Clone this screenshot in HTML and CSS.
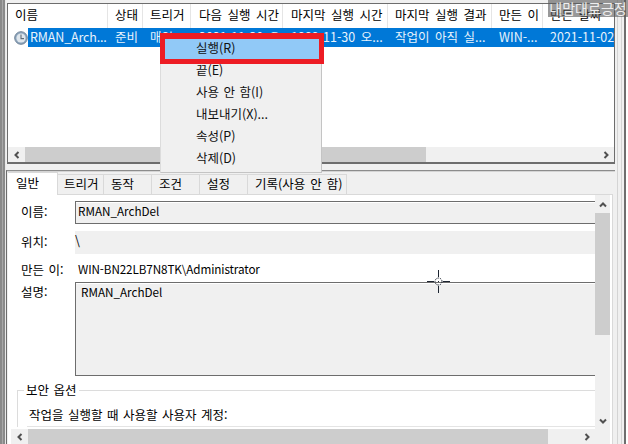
FILE: index.html
```html
<!DOCTYPE html>
<html lang="ko">
<head>
<meta charset="utf-8">
<title>작업 스케줄러</title>
<link rel="stylesheet" href="styles.css">
</head>
<body>
<div class="window">
  <div class="edge-left"></div>
  <main class="main">
    <section class="list-panel">
      <div class="cols head">
        <div>이름</div><div>상태</div><div>트리거</div><div>다음 실행 시간</div><div>마지막 실행 시간</div><div>마지막 실행 결과</div><div>만든 이</div><div>만든 날짜</div>
      </div>
      <div class="list-body">
        <div class="row-wrap">
          <svg class="clock" width="14" height="14" viewBox="0 0 14 14"><circle cx="7" cy="7" r="6.3" fill="#8ea6bd" stroke="#6f8398"/><circle cx="7" cy="7" r="4.6" fill="#dfe6ec"/><path d="M7 3.5V7.6H10" fill="none" stroke="#5d6b78" stroke-width="1.1"/></svg>
          <div class="cols row">
            <div>RMAN_Arch...</div><div>준비</div><div>매일</div><div>2021-11-30 오...</div><div>1999-11-30 오...</div><div>작업이 아직 실...</div><div>WIN-...</div><div class="nowrap">2021-11-02 오전</div>
          </div>
        </div>
      </div>
      <div class="hscroll top-scroll">
        <div class="arrow"><svg width="8" height="8" viewBox="0 0 8 8"><path d="M5.5 1L2.5 4L5.5 7" fill="none" stroke="#505050" stroke-width="2"/></svg></div>
        <div class="thumb thumb-top"></div>
        <div class="track"></div>
        <div class="arrow"><svg width="8" height="8" viewBox="0 0 8 8"><path d="M2.5 1L5.5 4L2.5 7" fill="none" stroke="#505050" stroke-width="2"/></svg></div>
      </div>
    </section>
    <div class="splitter"></div>
    <section class="detail-panel">
      <div class="tabs">
        <div class="tab active t1">일반</div>
        <div class="tab t2">트리거</div>
        <div class="tab t3">동작</div>
        <div class="tab t3">조건</div>
        <div class="tab t3">설정</div>
        <div class="tab t6">기록(사용 안 함)</div>
      </div>
      <div class="page">
        <div class="page-left">
          <div class="form">
            <div class="field-row name-row"><label>이름:</label><div class="box latin">RMAN_ArchDel</div></div>
            <div class="field-row loc-row"><label>위치:</label><div class="plain">\</div></div>
            <div class="field-row author-row"><label>만든 이:</label><div class="author latin">WIN-BN22LB7N8TK\Administrator</div></div>
            <div class="field-row desc-row"><label>설명:</label><div class="box desc latin">RMAN_ArchDel</div></div>
            <fieldset class="group">
              <legend>보안 옵션</legend>
              <p class="group-text">작업을 실행할 때 사용할 사용자 계정:</p>
              <div class="group-line"></div>
            </fieldset>
          </div>
          <div class="hscroll bottom-scroll">
            <div class="arrow"><svg width="8" height="8" viewBox="0 0 8 8"><path d="M5.5 1L2.5 4L5.5 7" fill="none" stroke="#505050" stroke-width="2"/></svg></div>
            <div class="thumb thumb-bottom"></div>
            <div class="track"></div>
            <div class="arrow"><svg width="8" height="8" viewBox="0 0 8 8"><path d="M2.5 1L5.5 4L2.5 7" fill="none" stroke="#505050" stroke-width="2"/></svg></div>
          </div>
        </div>
        <div class="vscroll">
          <div class="varrow"><svg width="8" height="8" viewBox="0 0 8 8"><path d="M1 5.5L4 2.5L7 5.5" fill="none" stroke="#505050" stroke-width="2"/></svg></div>
          <div class="vthumb"></div>
          <div class="track"></div>
          <div class="varrow"><svg width="8" height="8" viewBox="0 0 8 8"><path d="M1 2.5L4 5.5L7 2.5" fill="none" stroke="#505050" stroke-width="2"/></svg></div>
          <div class="corner"></div>
        </div>
      </div>
    </section>
  </main>
  <div class="edge-right"></div>
</div>

<ul class="menu">
  <li class="hot">실행(R)</li>
  <li>끝(E)</li>
  <li>사용 안 함(I)</li>
  <li>내보내기(X)...</li>
  <li>속성(P)</li>
  <li>삭제(D)</li>
</ul>
<div class="callout"></div>
<div class="watermark">내맘대로긍정</div>
<svg class="cursor" width="23" height="23" viewBox="0 0 23 23"><path d="M11.5 0V7M11.5 16V23M0 11.5H7M16 11.5H23" stroke="#1c2430" stroke-width="1"/><circle cx="11.5" cy="11.5" r="3.5" fill="none" stroke="#1c2430" stroke-dasharray="1.5 1"/><rect x="11" y="11" width="1" height="1" fill="#1c2430"/></svg>
</body>
</html>
```

FILE: styles.css
```css
* { box-sizing: border-box; }
html, body { margin: 0; padding: 0; }
body {
  position: relative;
  width: 628px;
  height: 444px;
  overflow: hidden;
  background: #f0f0f0;
  color: #000;
  font-family: "Noto Sans CJK KR", "Noto Sans", sans-serif;
  font-size: 12.5px;
  line-height: 18px;
  word-spacing: 2px;
}
.latin { font-size: 11.7px; word-spacing: 0; }
.window { display: flex; width: 628px; height: 444px; }
.edge-left {
  flex: 0 0 6px;
  background: linear-gradient(90deg, #8a8a8a 0 2px, #a8a8a8 2px 3px, #8a8a8a 3px 5px, #e8e8e8 5px);
}
.edge-right {
  flex: 0 0 13px;
  background: linear-gradient(90deg, #f0f0f0 0 2px, #d4d4d4 2px 3px, #f0f0f0 3px 6px, #d4d4d4 6px 7px, #f0f0f0 7px 9px, #6e6e6e 9px 11px, #ffffff 11px);
}
.main { flex: 1; display: flex; flex-direction: column; min-width: 0; padding-top: 3px; }

.list-panel {
  flex: 0 0 161px;
  margin-left: 1px;
  display: flex;
  flex-direction: column;
  border: 1px solid #6d6d6d;
  border-width: 1px 1px 2px 1px;
  background: #fff;
}
.cols { display: grid; grid-template-columns: 100px 35px 48px 92px 105px 104px 51px 71px; }
.head { flex: 0 0 24px; align-items: center; }
.head > div { height: 24px; padding: 2px 0 0 7px; border-right: 1px solid #e5e5e5; white-space: nowrap; overflow: hidden; }
.head > div:nth-child(4), .head > div:nth-child(5) { padding-left: 8px; }
.head > div:last-child { border-right: 0; }
.list-body { flex: 1; min-height: 0; }
.row-wrap { position: relative; height: 19px; overflow: hidden; }
.clock { position: absolute; left: 6px; top: 3px; }
.row {
  height: 19px;
  color: #e8f3fc;
  background: linear-gradient(90deg, #fff 0 20px, #0078d7 20px);
}
.row > div { padding: 0 0 0 7px; white-space: nowrap; overflow: hidden; }
.row > div:first-child { padding-left: 22px; letter-spacing: -0.15px; }
.row > div:nth-child(4), .row > div:nth-child(5) { padding-left: 8px; }
.row > .nowrap { overflow: hidden; }

.hscroll { display: flex; background: #f0f0f0; }
.top-scroll { flex: 0 0 15px; }
.arrow { flex: 0 0 17px; display: flex; align-items: center; justify-content: center; }
.thumb { background: #cdcdcd; }
.thumb-top { flex: 0 0 401px; }
.track { flex: 1; }

.splitter { flex: 0 0 6px; }

.detail-panel {
  flex: 1;
  min-height: 0;
  display: flex;
  flex-direction: column;
  border-top: 1px solid #8c8c8c;
  border-left: 1px solid #6d6d6d;
  box-shadow: inset 0 1px 0 #d4d4d4;
}
.tabs { flex: 0 0 23px; display: flex; align-items: flex-end; padding-left: 1px; }
.tab {
  height: 20px;
  padding: 0 0 1px 6px;
  line-height: 17px;
  background: #f0f0f0;
  border: 1px solid #d9d9d9;
  border-left: 0;
  border-bottom: 0;
  white-space: nowrap;
}
.t1 { width: 50px; }
.t2 { width: 46px; }
.t3 { width: 48px; padding-left: 7px; }
.t6 { width: 99px; padding-left: 7px; word-spacing: 1.5px; }
.active {
  height: 23px;
  padding: 1px 0 0 8px;
  line-height: 18px;
  background: #fff;
  margin-bottom: -1px;
  position: relative;
  z-index: 1;
}
.page {
  flex: 1;
  min-height: 0;
  display: flex;
  margin-left: 1px;
  margin-right: 2px;
  padding-right: 2px;
  background: #fff;
  border-top: 1px solid #d9d9d9;
  border-right: 1px solid #d9d9d9;
  box-shadow: 1px 0 0 #f0f0f0;
}
.page-left { flex: 1; min-width: 0; display: flex; flex-direction: column; }
.form { flex: 1; min-height: 0; padding: 6px 0 0 13px; overflow: hidden; }
.field-row { display: grid; grid-template-columns: 54px 1fr; }
.field-row label { white-space: nowrap; padding-top: 2px; word-spacing: 1px; font-size: 12.5px; }
.box {
  background: #f0f0f0;
  border-top: 1px solid #6d6d6d;
  border-bottom: 1px solid #6d6d6d;
  border-left: 1px solid #6d6d6d;
  box-shadow: inset 0 1px 0 #fff;
  padding: 0 0 0 2px;
}
.name-row .box { height: 23px; }
.loc-row { margin-top: 7px; }
.plain { height: 23px; background: #f0f0f0; padding: 0; }
.author-row { margin-top: 6px; height: 22px; }
.author-row label { padding-top: 1px; }
.author { padding: 0 0 0 3px; letter-spacing: -0.1px; }
.desc-row { margin-top: 0; }
.desc-row label { padding-top: 1px; }
.desc { height: 94px; padding: 0 0 0 5px; border-right: 0; line-height: 17px; }
.group {
  margin: 5px 0 0 -4px;
  padding: 0 0 0 12px;
  min-width: 0;
  border: 0;
  border-top: 1px solid #dcdcdc;
  border-left: 1px solid #dcdcdc;
}
.group legend { margin-left: -6px; padding: 0 2px; word-spacing: 1px; }
.group-text { margin: 7px 0 0 -1px; word-spacing: 1px; }
.group-line { margin-top: 2px; margin-left: -3px; border-top: 1px solid #e4e4e4; }
.bottom-scroll { flex: 0 0 15px; margin-left: 3px; }
.thumb-bottom { flex: 0 0 520px; }
.vscroll { flex: 0 0 15px; display: flex; flex-direction: column; background: #f0f0f0; padding-top: 1px; }
.varrow { flex: 0 0 17px; display: flex; align-items: center; justify-content: center; }
.vthumb { flex: 0 0 122px; background: #cdcdcd; }
.corner { flex: 0 0 15px; }

.menu {
  position: absolute;
  left: 160px;
  top: 37px;
  width: 162px;
  height: 136px;
  margin: 0;
  padding: 0 2px;
  list-style: none;
  background: #f0f0f0;
  border-right: 1px solid #c4c4c4;
  border-bottom: 1px solid #c4c4c4;
  border-left: 1px solid #dcdcdc;
  word-spacing: 1px;
}
.menu li { height: 22px; line-height: 22px; padding-left: 33px; color: #111; }
.menu .hot { height: 22px; background: #91c9f7; }
.callout {
  position: absolute;
  left: 160px;
  top: 33px;
  width: 164px;
  height: 31px;
  border: 5px solid #ed1c24;
  border-top-width: 6px;
}
.watermark {
  position: absolute;
  right: 0;
  top: 0;
  width: 80px;
  height: 17px;
  background: rgba(90, 90, 90, .62);
  color: #eee;
  font-size: 14px;
  line-height: 17px;
  text-align: center;
  white-space: nowrap;
}
.cursor { position: absolute; left: 427px; top: 270px; }
```
